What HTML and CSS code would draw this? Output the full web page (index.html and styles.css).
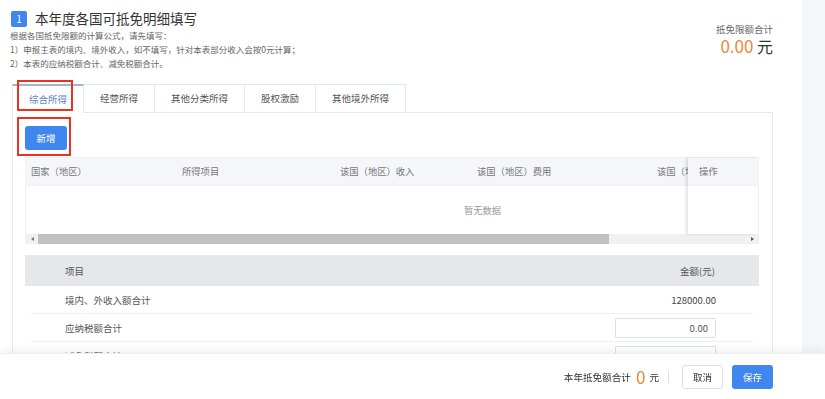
FILE: index.html
```html
<!DOCTYPE html>
<html lang="zh-CN">
<head>
    <meta charset="UTF-8">
    <meta name="viewport" content="width=device-width, initial-scale=1.0">
    <title>本年度各国可抵免明细填写</title>
    <link rel="stylesheet" href="styles.css">
</head>
<body>
    <div class="page">
        <div class="main">
            <div class="head">
                <div class="head-left">
                    <h1 class="title"><span class="step">1</span>本年度各国可抵免明细填写</h1>
                    <p class="tips">根据各国抵免限额的计算公式，请先填写：<br>1）申报主表的境内、境外收入，如不填写，针对本表部分收入会按0元计算；<br>2）本表的应纳税额合计、减免税额合计。</p>
                </div>
                <div class="head-total">
                    <div class="total-label">抵免限额合计</div>
                    <div class="total-value"><span class="num">0.00</span> 元</div>
                </div>
            </div>

            <div class="panel">
                <div class="tabs">
                    <div class="tab active">综合所得</div>
                    <div class="tab">经营所得</div>
                    <div class="tab">其他分类所得</div>
                    <div class="tab">股权激励</div>
                    <div class="tab">其他境外所得</div>
                </div>

                <div class="panel-body">
                    <button class="btn btn-primary btn-add">新增</button>

                    <div class="grid">
                        <div class="grid-scroll">
                            <div class="grid-inner">
                                <div class="grid-head">
                                    <div class="col c1">国家（地区）</div>
                                    <div class="col c2">所得项目</div>
                                    <div class="col c3">该国（地区）收入</div>
                                    <div class="col c4">该国（地区）费用</div>
                                    <div class="col c5">该国（地区）应纳税额</div>
                                    <div class="col c6"></div>
                                </div>
                                <div class="grid-empty">暂无数据</div>
                            </div>
                        </div>
                        <div class="grid-fixed">
                            <div class="grid-head"><div class="col">操作</div></div>
                        </div>
                        <div class="hscroll">
                            <span class="arrow arrow-left"></span>
                            <div class="track"><div class="thumb"></div></div>
                            <span class="arrow arrow-right"></span>
                        </div>
                    </div>

                    <div class="sum">
                        <div class="sum-head">
                            <span>项目</span>
                            <span>金额(元)</span>
                        </div>
                        <div class="sum-row">
                            <span>境内、外收入额合计</span>
                            <span class="amount">128000.00</span>
                        </div>
                        <div class="sum-row">
                            <span>应纳税额合计</span>
                            <input class="amount-input" type="text" value="0.00">
                        </div>
                        <div class="sum-row">
                            <span>减免税额合计</span>
                            <input class="amount-input" type="text" value="0.00">
                        </div>
                    </div>
                </div>

                <!-- red highlight boxes from the screenshot -->
                <div class="mark mark-tab"></div>
                <div class="mark mark-btn"></div>
            </div>
        </div>
        <div class="aside"></div>
    </div>

    <div class="footer">
        <span class="foot-label">本年抵免额合计</span>
        <span class="foot-num">0</span>
        <span class="foot-label">元</span>
        <span class="foot-divider"></span>
        <button class="btn btn-default">取消</button>
        <button class="btn btn-primary btn-save">保存</button>
    </div>
</body>
</html>
```

FILE: styles.css
```css
* {
    box-sizing: border-box;
}

body {
    margin: 0;
    font-family: "Noto Sans CJK SC", "Liberation Sans", sans-serif;
    color: #333;
    background-color: #fff;
}

.page {
    display: flex;
    height: 399px;
    overflow: hidden;
}

.main {
    width: 802px;
    padding: 10px 29px 0 11px;
}

.aside {
    flex: 1;
    background-color: #f5f6fa;
}

/* header */
.head {
    display: flex;
    justify-content: space-between;
}

.title {
    margin: 0;
    display: flex;
    align-items: center;
    height: 17px;
    font-size: 13.5px;
    font-weight: normal;
    line-height: 17px;
    color: #333;
}

.step {
    width: 16px;
    height: 16px;
    margin-right: 8px;
    border-radius: 2px;
    background-color: #3f86ee;
    color: #fff;
    font-size: 10px;
    display: flex;
    align-items: center;
    justify-content: center;
}

.tips {
    margin: 1px 0 0 -1px;
    font-size: 8.5px;
    line-height: 14px;
    color: #666;
}

.head-total {
    text-align: right;
    padding-top: 13px;
}

.total-label {
    font-size: 9.5px;
    line-height: 12px;
    color: #666;
}

.total-value {
    margin-top: 2px;
    font-size: 16px;
    line-height: 18px;
    color: #333;
}

.total-value .num {
    color: #e8893b;
    font-size: 17px;
}

/* tabs panel */
.panel {
    position: relative;
    margin: 14px 0 0 1px;
}

.tabs {
    display: flex;
    height: 29px;
    border-bottom: 1px solid #e4e7ed;
}

.tab {
    height: 28px;
    padding: 0 16px;
    border: 1px solid #e4e7ed;
    border-left: none;
    border-bottom: none;
    font-size: 9.5px;
    line-height: 27px;
    color: #555;
    background-color: #fff;
}

.tab:first-child {
    border-left: 1px solid #e4e7ed;
}

.tab.active {
    height: 29px;
    border-top: 2px solid #a9b3c2;
    color: #6383c4;
    line-height: 26px;
}

.panel-body {
    border-left: 1px solid #e8eaee;
    border-right: 1px solid #e8eaee;
    padding: 13px 13px 0 12px;
}

.btn {
    height: 24px;
    padding: 0;
    border-radius: 3px;
    font-family: inherit;
    font-size: 9.5px;
    cursor: pointer;
}

.btn-primary {
    border: none;
    background-color: #3f86ee;
    color: #fff;
}

.btn-default {
    border: 1px solid #dcdfe6;
    background-color: #fff;
    color: #333;
}

.btn-add {
    display: block;
    width: 42px;
}

/* list table */
.grid {
    position: relative;
    margin-top: 7px;
    border: 1px solid #f0f1f4;
    border-bottom: none;
}

.grid-scroll {
    overflow: hidden;
}

.grid-inner {
    width: 913px;
}

.grid-head {
    display: flex;
    height: 28px;
    background-color: #f5f6f9;
    border-bottom: 1px solid #eef0f3;
}

.col {
    flex: none;
    padding-left: 8px;
    font-size: 9.3px;
    line-height: 27px;
    color: #777;
    white-space: nowrap;
    overflow: hidden;
}

.c1 { width: 148px; padding-left: 5px; }
.c2 { width: 158px; }
.c3 { width: 137px; }
.c4 { width: 180px; }
.c5 { width: 150px; }
.c6 { width: 140px; }

.grid-empty {
    height: 48px;
    line-height: 48px;
    text-align: center;
    font-size: 9.3px;
    color: #999;
}

.grid-fixed {
    position: absolute;
    top: 0;
    right: 0;
    width: 70px;
    height: 76px;
    background-color: #fff;
    box-shadow: -2px 0 3px rgba(0, 0, 0, 0.12);
}

.grid-fixed .col {
    padding-left: 11px;
}

.hscroll {
    display: flex;
    align-items: center;
    height: 10px;
    background-color: #f1f1f1;
}

.arrow {
    width: 12px;
    height: 10px;
    position: relative;
}

.arrow-left::after,
.arrow-right::after {
    content: "";
    position: absolute;
    top: 3px;
    border-top: 2px solid transparent;
    border-bottom: 2px solid transparent;
}

.arrow-left::after {
    left: 5px;
    border-right: 3px solid #777;
}

.arrow-right::after {
    left: 5px;
    border-left: 3px solid #555;
}

.track {
    flex: 1;
    height: 10px;
}

.thumb {
    width: 571px;
    height: 10px;
    background-color: #c1c1c1;
}

/* summary table */
.sum {
    margin-top: 11px;
}

.sum-head {
    display: flex;
    justify-content: space-between;
    align-items: center;
    height: 31px;
    padding: 0 44px 0 40px;
    background-color: #e6e7ea;
    font-size: 9.5px;
    color: #555;
}

.sum-row {
    display: flex;
    justify-content: space-between;
    align-items: center;
    height: 28px;
    margin: 0 6px;
    padding: 0 37px 0 34px;
    border-bottom: 1px solid #eeeff1;
    font-size: 9.5px;
    color: #555;
}

.amount {
    color: #444;
}

.amount-input {
    width: 101px;
    height: 20px;
    padding: 0 7px;
    border: 1px solid #dcdfe6;
    border-radius: 1px;
    font-family: inherit;
    font-size: 9.5px;
    color: #555;
    text-align: right;
}

/* red highlight boxes */
.mark {
    position: absolute;
    border: 2px solid #e93223;
}

.mark-tab {
    left: 5px;
    top: -4px;
    width: 56px;
    height: 31px;
}

.mark-btn {
    left: 5px;
    top: 33px;
    width: 54px;
    height: 39px;
}

/* footer */
.footer {
    position: fixed;
    left: 0;
    right: 0;
    bottom: 0;
    height: 46px;
    display: flex;
    align-items: center;
    justify-content: flex-end;
    padding-right: 52px;
    background-color: #fff;
    border-top: 1px solid #eee;
    box-shadow: 0 -3px 8px rgba(0, 0, 0, 0.06);
}

.foot-label {
    font-size: 9.6px;
    color: #333;
}

.foot-num {
    margin: 0 4px 0 5px;
    font-size: 17px;
    line-height: 20px;
    color: #e8893b;
}

.foot-divider {
    width: 1px;
    height: 12px;
    margin: 0 13px 0 9px;
    background-color: #ddd;
}

.footer .btn {
    width: 41px;
}

.btn-save {
    margin-left: 9px;
}
```
